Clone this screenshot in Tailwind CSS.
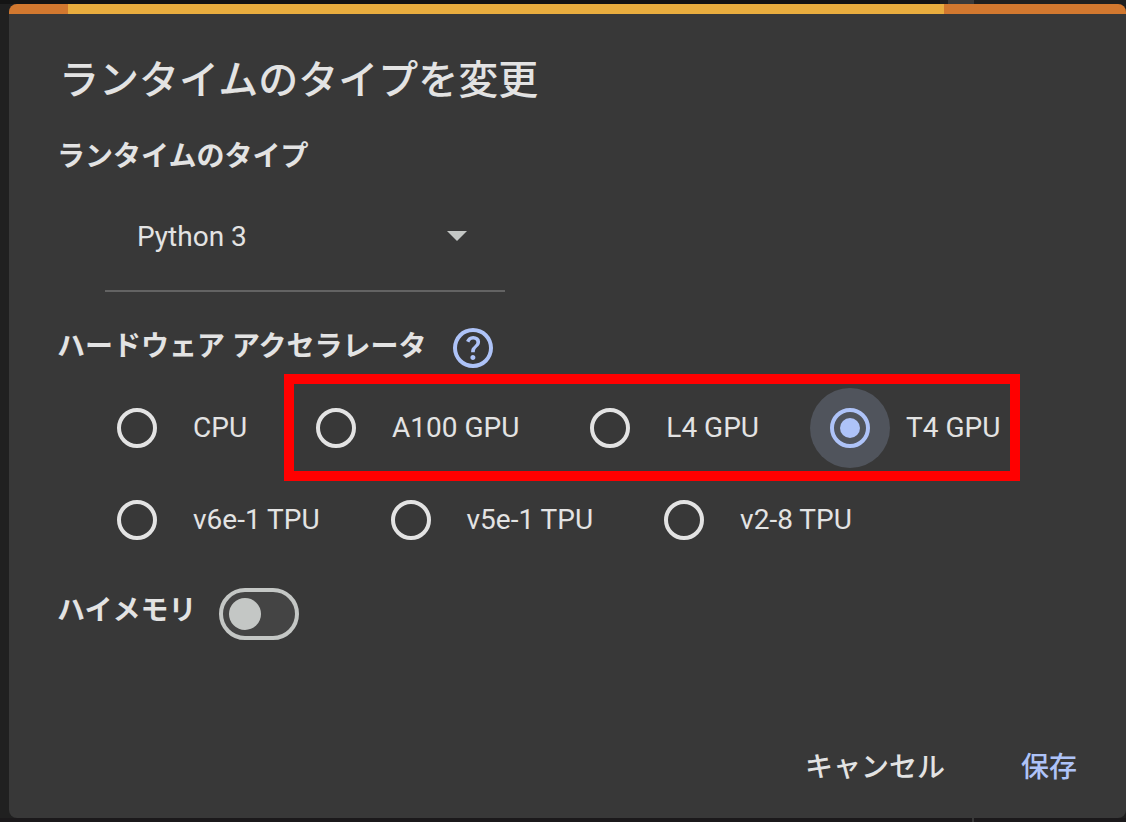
<!DOCTYPE html>
<html lang="ja">
<head>
  <meta charset="UTF-8">
  <meta name="viewport" content="width=device-width, initial-scale=1.0">
  <title>ランタイムのタイプを変更</title>
  <script src="https://cdn.jsdelivr.net/npm/@tailwindcss/browser@4"></script>
  <style>
    body {
      font-family: Roboto, 'Noto Sans CJK JP', sans-serif;
    }
  </style>
</head>
<body class="bg-[#202020] text-[#e3e3e3] min-h-screen flex flex-col">
  <div class="flex h-1 bg-[#141414]">
    <div class="flex-1"></div>
    <div class="w-2 bg-[#202020]"></div>
    <div class="w-[26px] bg-[#3a3a3a]"></div>
    <div class="w-[152px] bg-[#202020]"></div>
  </div>

  <main role="dialog" aria-labelledby="titulo" class="flex-1 flex flex-col ml-[9px] bg-[#383838] rounded-lg overflow-hidden">
    <!-- barra de progreso -->
    <div class="flex h-[10px] bg-[#d2782f]">
      <div class="w-[59px]"></div>
      <div class="flex-1 bg-[#e9ad3e]"></div>
      <div class="w-[182px]"></div>
    </div>

    <div class="flex-1 flex flex-col pl-12 pr-[25px] pt-[43px]">
      <h1 id="titulo" class="pl-0.5 text-[40px] leading-12 font-medium">ランタイムのタイプを変更</h1>

      <label for="runtime" class="mt-8 text-[28px] leading-10 font-bold">ランタイムのタイプ</label>
      <div class="relative ml-12 mt-[5px] w-[400px]">
        <select id="runtime" class="appearance-none w-full h-[110px] px-8 pt-0.5 text-[28px] border-b-2 border-[#636363] bg-[#383838] outline-none">
          <option>Python 3</option>
        </select>
        <svg class="absolute right-[38px] top-[49px] w-5 h-[10px] pointer-events-none" viewBox="0 0 20 10" fill="#c4c7c5"><path d="M0 0h20L10 10z"/></svg>
      </div>

      <div class="flex mt-8 gap-[22px]">
        <h2 id="acelerador" class="text-[28px] leading-[46px] font-bold">ハードウェア アクセラレータ</h2>
        <button type="button" aria-label="ヘルプ" class="size-12">
          <svg class="size-12" viewBox="0 -960 960 960" fill="#aec3f8"><path d="M478-240q21 0 35.500-14.500T528-290q0-21-14.500-35.500T478-340q-21 0-35.500 14.500T428-290q0 21 14.500 35.500T478-240Zm-36-154h74q0-33 7.500-52t42.500-52q26-26 41-49.500t15-56.500q0-56-41-86t-97-30q-57 0-92.500 30T342-618l66 26q5-18 22.500-39t53.500-21q32 0 48 17.500t16 38.500q0 20-12 37.500T506-526q-44 39-54 59t-10 73Zm38 314q-83 0-156-31.500T197-197q-54-54-85.500-127T80-480q0-83 31.500-156T197-763q54-54 127-85.500T480-880q83 0 156 31.500T763-763q54 54 85.500 127T880-480q0 83-31.500 156T763-197q-54 54-127 85.500T480-80Zm0-80q134 0 227-93t93-227q0-134-93-227t-227-93q-134 0-227 93t-93 227q0 134 93 227t227 93Z"/></svg>
        </button>
      </div>

      <div role="radiogroup" aria-labelledby="acelerador" class="flex flex-col gap-3 mt-4 ml-10 text-[28px] leading-10 whitespace-nowrap">
        <div class="flex gap-[49px]">
          <label class="flex items-center gap-4">
            <span class="grid place-items-center size-20 rounded-full"><input type="radio" name="gpu" class="appearance-none size-10 rounded-full border-4 border-[#e3e3e3]"></span>
            CPU
          </label>
          <div class="relative flex gap-[51px]">
            <label class="flex items-center gap-4">
              <span class="grid place-items-center size-20 rounded-full"><input type="radio" name="gpu" class="appearance-none size-10 rounded-full border-4 border-[#e3e3e3]"></span>
              A100 GPU
            </label>
            <label class="flex items-center gap-4">
              <span class="grid place-items-center size-20 rounded-full"><input type="radio" name="gpu" class="appearance-none size-10 rounded-full border-4 border-[#e3e3e3]"></span>
              L4 GPU
            </label>
            <label class="flex items-center gap-4">
              <span class="grid place-items-center size-20 rounded-full bg-[#50545c]"><input type="radio" name="gpu" checked class="appearance-none grid place-items-center size-10 rounded-full border-4 border-[#aec3f8] before:size-5 before:rounded-full before:bg-[#aec3f8]"></span>
              T4 GPU
            </label>
            <!-- marco rojo sobre las GPU -->
            <div class="absolute -left-3 -right-5 -top-[14px] -bottom-[13px] border-[10px] border-[#ff0000] pointer-events-none"></div>
          </div>
        </div>
        <div class="flex gap-[51px]">
          <label class="flex items-center gap-4">
            <span class="grid place-items-center size-20 rounded-full"><input type="radio" name="gpu" class="appearance-none size-10 rounded-full border-4 border-[#e3e3e3]"></span>
            v6e-1 TPU
          </label>
          <label class="flex items-center gap-4">
            <span class="grid place-items-center size-20 rounded-full"><input type="radio" name="gpu" class="appearance-none size-10 rounded-full border-4 border-[#e3e3e3]"></span>
            v5e-1 TPU
          </label>
          <label class="flex items-center gap-4">
            <span class="grid place-items-center size-20 rounded-full"><input type="radio" name="gpu" class="appearance-none size-10 rounded-full border-4 border-[#e3e3e3]"></span>
            v2-8 TPU
          </label>
        </div>
      </div>

      <div class="flex mt-7 gap-[23px]">
        <label for="memoria" class="text-[28px] leading-[46px] font-bold">ハイメモリ</label>
        <input id="memoria" type="checkbox" role="switch" class="appearance-none flex items-center w-20 h-[52px] px-[6px] rounded-full border-4 border-[#c4c7c5] bg-[#444444] before:size-8 before:rounded-full before:bg-[#c4c7c5]">
      </div>

      <div class="flex justify-end mt-auto mb-[22px] text-[28px] leading-10 font-medium">
        <button type="button" class="px-6 h-14">キャンセル</button>
        <button type="button" class="ml-7 px-6 h-14 text-[#aec3f8]">保存</button>
      </div>
    </div>
  </main>

  <div class="flex h-1 bg-[#1b191b]">
    <div class="flex-1"></div>
    <div class="w-[2px] bg-[#383838]"></div>
    <div class="w-[152px]"></div>
  </div>
</body>
</html>
